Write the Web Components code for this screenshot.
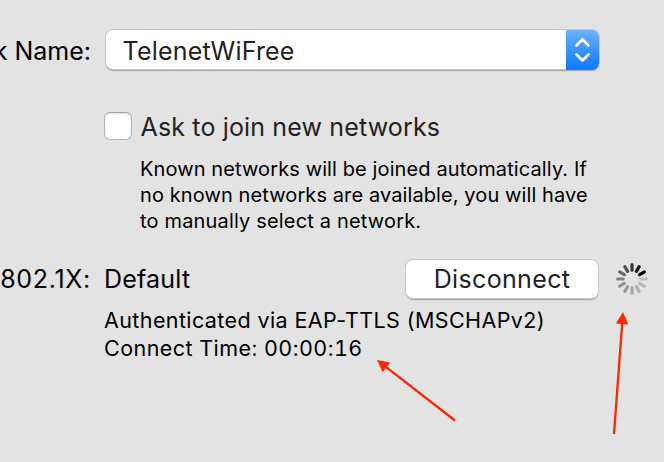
<!DOCTYPE html>
<html lang="en">
<head>
<meta charset="utf-8">
<title>Network</title>
<style>
  body {
    margin: 0;
    background: #e3e3e3;
    font-family: Inter, "Liberation Sans", sans-serif;
    font-size: 25px;
    color: #000;
    overflow: hidden;
  }
</style>
</head>
<body>
<network-panel>
  <form-row>
    <span slot="label">k Name:</span>
    <popup-button>TelenetWiFree</popup-button>
  </form-row>
  <form-row class="ask">
    <check-box>Ask to join new networks</check-box>
    <help-text>
      <div style="letter-spacing: 0.11px">Known networks will be joined automatically. If</div>
      <div style="letter-spacing: 0.1px">no known networks are available, you will have</div>
      <div style="letter-spacing: 0.17px">to manually select a network.</div>
    </help-text>
  </form-row>
  <form-row class="auth">
    <span slot="label" style="letter-spacing: 0.7px">802.1X:</span>
    <auth-status profile="Default">
      <push-button slot="action">Disconnect</push-button>
      <progress-spinner slot="action"></progress-spinner>
      <div style="letter-spacing: 0.4px">Authenticated via EAP-TTLS (MSCHAPv2)</div>
      <div style="letter-spacing: 0.45px; font-variant-numeric: tabular-nums">Connect Time: 00:00:16</div>
    </auth-status>
  </form-row>
  <arrow-note slot="notes" x1="455" y1="420.5" x2="377" y2="360"></arrow-note>
  <arrow-note slot="notes" x1="614" y1="434" x2="623" y2="312"></arrow-note>
</network-panel>

<script>
// Gives an element an open shadow root with the markup passed in
function attach(el, html) {
  el.attachShadow({ mode: 'open' }).innerHTML = html;
}

class NetworkPanel extends HTMLElement {
  constructor() {
    super();
    attach(this, `
      <style>
        :host {
          display: flex;
          flex-direction: column;
          position: relative;
          box-sizing: border-box;
          height: 462px;
          padding-top: 30px;
          overflow: hidden;
        }
        ::slotted(.ask) { margin-top: 42px; }
        ::slotted(.auth) { margin-top: 25px; }
      </style>
      <slot></slot>
      <slot name="notes"></slot>
    `);
  }
}

class FormRow extends HTMLElement {
  constructor() {
    super();
    attach(this, `
      <style>
        :host {
          display: grid;
          grid-template-columns: 91px 1fr;
          column-gap: 13px;
        }
        .label {
          display: flex;
          justify-content: flex-end;
          height: 40px;
          line-height: 42px;
          white-space: nowrap;
        }
        :host(.auth) .label { line-height: 40px; }
      </style>
      <div class="label"><slot name="label"></slot></div>
      <div><slot></slot></div>
    `);
  }
}

class PopupButton extends HTMLElement {
  constructor() {
    super();
    attach(this, `
      <style>
        :host {
          display: flex;
          justify-content: space-between;
          width: 493px;
          height: 39px;
          margin-left: 2px;
          border-radius: 7px;
          background: #fff;
          box-shadow: 0 0 0 1px #c6c6c6, 0 1.5px 1px #a2a2a2;
          color: #222;
          line-height: 42px;
          letter-spacing: 0.2px;
        }
        .text { padding-left: 16.5px; }
        .cap {
          width: 33px;
          height: 40px;
          border-radius: 0 7px 7px 0;
          background: linear-gradient(#6bb3fa, #3c94fb 50%, #0a7aff);
        }
        svg { display: block; }
      </style>
      <span class="text"><slot></slot></span>
      <span class="cap">
        <svg width="33" height="40" fill="none" stroke="#fff" stroke-width="2.8" stroke-linecap="round" stroke-linejoin="round">
          <path d="M10.5 15.5 16.5 9.5 22.5 15.5M10.5 24.5 16.5 30.5 22.5 24.5"/>
        </svg>
      </span>
    `);
  }
}

class CheckBox extends HTMLElement {
  constructor() {
    super();
    attach(this, `
      <style>
        :host {
          display: flex;
          align-items: center;
          height: 28px;
          color: #222;
          letter-spacing: 0.15px;
          line-height: 30px;
        }
        .box {
          box-sizing: border-box;
          width: 28px;
          height: 28px;
          margin-right: 8.5px;
          border: 1px solid #b5b5b5;
          border-top-color: #a5a5a5;
          border-radius: 6px;
          background: #fff;
          box-shadow: inset 0 1px 2px #ddd;
        }
        .text { padding-top: 2px; }
      </style>
      <span class="box"></span>
      <span class="text"><slot></slot></span>
    `);
  }
}

class HelpText extends HTMLElement {
  constructor() {
    super();
    attach(this, `
      <style>
        :host {
          display: block;
          margin: 16px 0 0 36px;
          font-size: 20px;
          line-height: 26px;
          white-space: nowrap;
        }
      </style>
      <slot></slot>
    `);
  }
}

class PushButton extends HTMLElement {
  constructor() {
    super();
    attach(this, `
      <style>
        :host {
          display: block;
          width: 192px;
          height: 38px;
          border-radius: 7px;
          background: #fff;
          box-shadow: 0 0 0 1px #c8c8c8, 0 1.5px 1px #a2a2a2;
          color: #222;
          line-height: 38px;
          letter-spacing: 0.35px;
          text-align: center;
        }
      </style>
      <slot></slot>
    `);
  }
}

class ProgressSpinner extends HTMLElement {
  constructor() {
    super();
    // Grey level of each spoke, clockwise from 12 o'clock
    const shades = ['#363636', '#1a1a1a', '#000', '#bdbdbd', '#b8b8b8', '#b0b0b0',
      '#a6a6a6', '#9c9c9c', '#919191', '#808080', '#696969', '#505050'];
    const spokes = shades.map((c, i) =>
      `<path d="M0-14.3V-8.8" stroke="${c}" transform="rotate(${i * 30})"/>`).join('');
    attach(this, `
      <style>
        :host { display: block; width: 34px; height: 34px; }
        svg { display: block; }
      </style>
      <svg width="34" height="34" viewBox="-17 -17 34 34" stroke-width="3.2" stroke-linecap="round">${spokes}</svg>
    `);
  }
}

class AuthStatus extends HTMLElement {
  constructor() {
    super();
    attach(this, `
      <style>
        :host { display: block; }
        .top { display: flex; height: 40px; }
        .profile { width: 302px; line-height: 40px; letter-spacing: 0.2px; }
        .actions { display: flex; align-items: center; gap: 17px; }
        .details {
          margin-top: 7px;
          font-size: 21.5px;
          line-height: 28px;
          white-space: nowrap;
        }
      </style>
      <div class="top">
        <span class="profile">${this.getAttribute('profile')}</span>
        <div class="actions"><slot name="action"></slot></div>
      </div>
      <div class="details"><slot></slot></div>
    `);
  }
}

// Red annotation arrow over the panel, from (x1, y1) to its tip at (x2, y2)
class ArrowNote extends HTMLElement {
  constructor() {
    super();
    const [x1, y1, x2, y2] = ['x1', 'y1', 'x2', 'y2'].map(n => Number(this.getAttribute(n)));
    const length = Math.hypot(x2 - x1, y2 - y1);
    const angle = Math.atan2(y2 - y1, x2 - x1) * 180 / Math.PI;
    attach(this, `
      <style>
        :host { position: absolute; inset: 0; pointer-events: none; }
        svg { display: block; }
      </style>
      <svg width="664" height="462">
        <g transform="translate(${x2} ${y2}) rotate(${angle})">
          <path d="M${-length} 0H-10" stroke="#ff2600" stroke-width="2.3"/>
          <path d="M0 0-12-6.2V6.2Z" fill="#ff2600"/>
        </g>
      </svg>
    `);
  }
}

customElements.define('network-panel', NetworkPanel);
customElements.define('form-row', FormRow);
customElements.define('popup-button', PopupButton);
customElements.define('check-box', CheckBox);
customElements.define('help-text', HelpText);
customElements.define('push-button', PushButton);
customElements.define('progress-spinner', ProgressSpinner);
customElements.define('auth-status', AuthStatus);
customElements.define('arrow-note', ArrowNote);
</script>
</body>
</html>
